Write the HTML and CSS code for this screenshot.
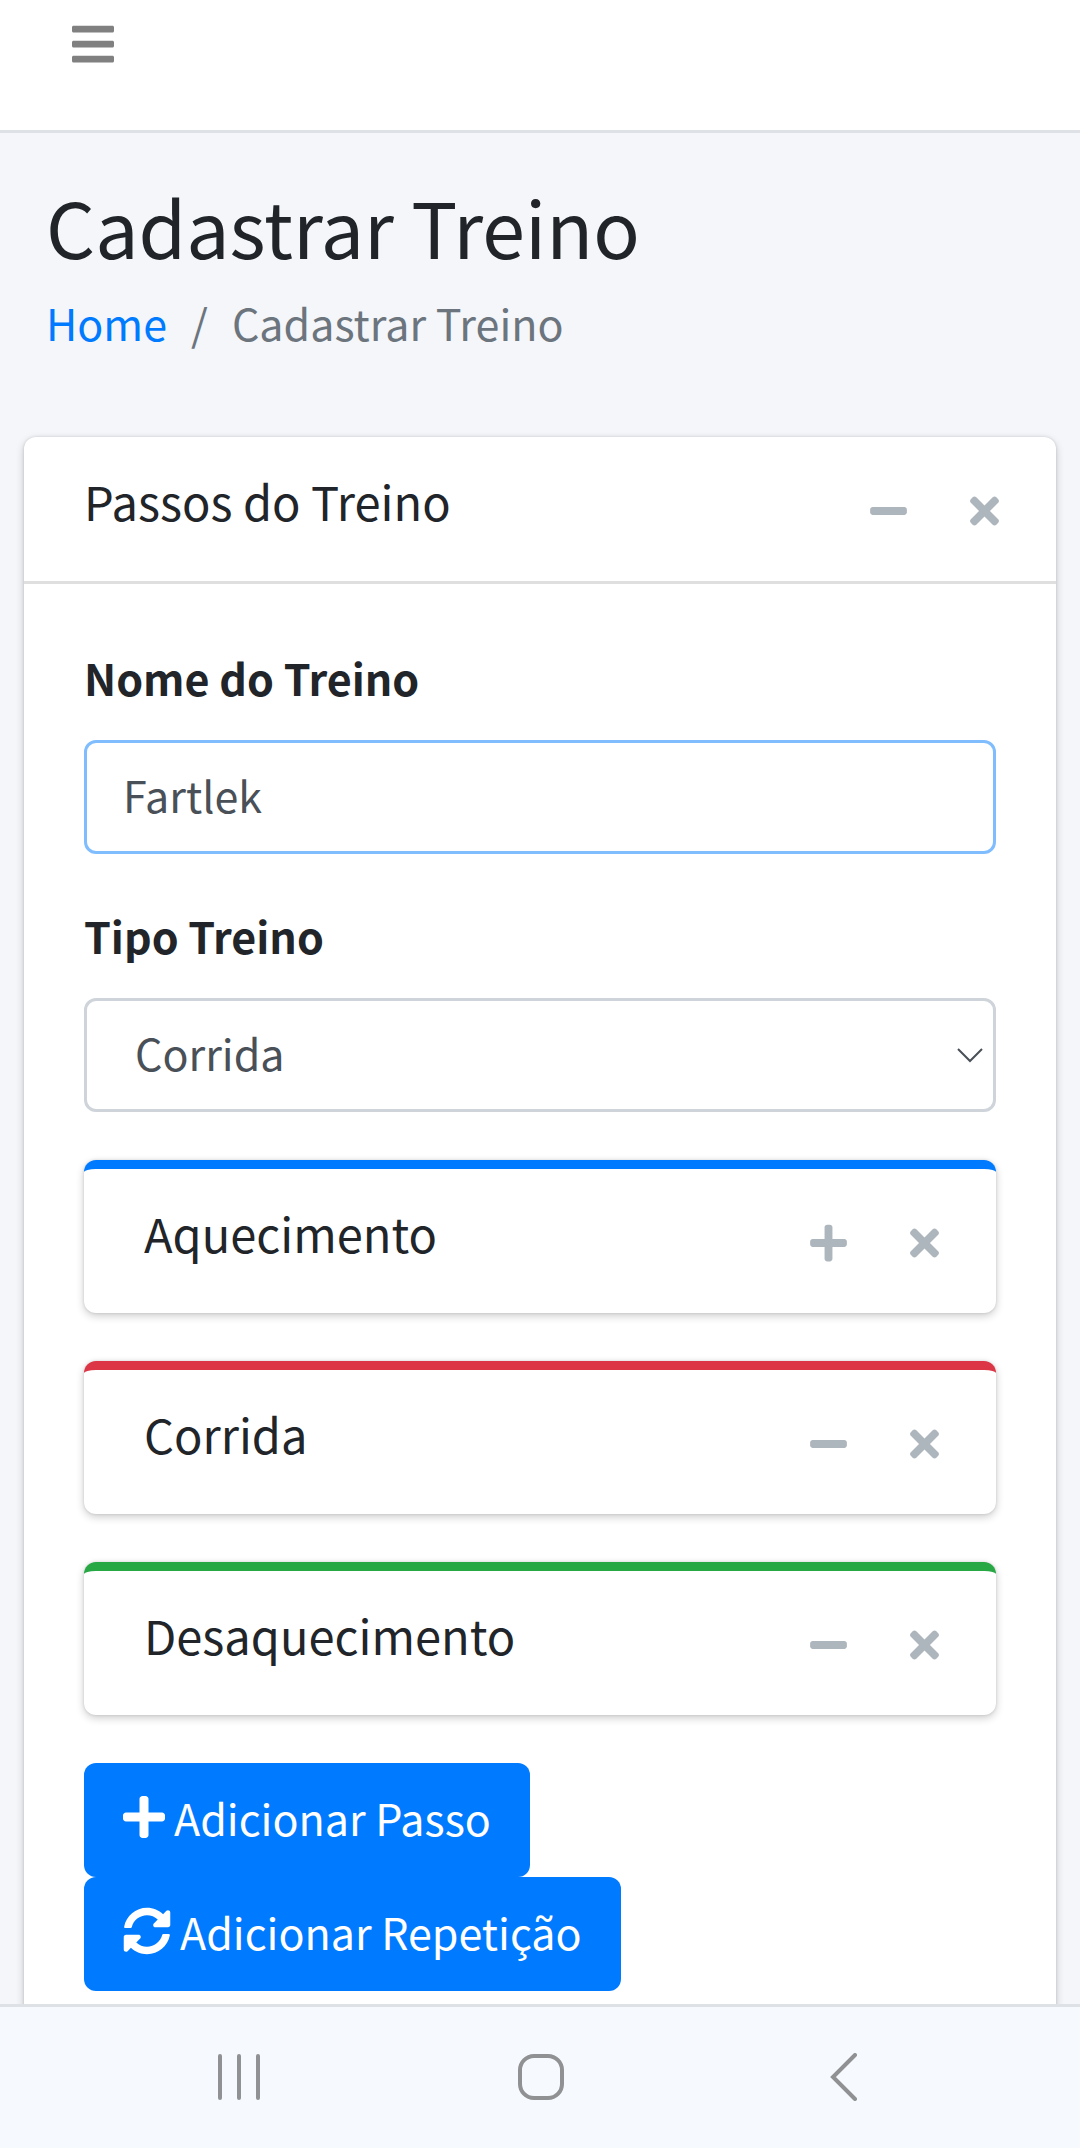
FILE: index.html
```html
<!DOCTYPE html>
<html lang="pt-BR">
<head>
<meta charset="utf-8">
<meta name="viewport" content="width=device-width, initial-scale=1">
<title>Cadastrar Treino</title>
<link rel="stylesheet" href="styles.css">
</head>
<body>
<svg class="sprite" aria-hidden="true">
  <symbol id="bars" viewBox="0 0 448 512"><path d="M16 132h416c8.837 0 16-7.163 16-16V76c0-8.837-7.163-16-16-16H16C7.163 60 0 67.163 0 76v40c0 8.837 7.163 16 16 16zm0 160h416c8.837 0 16-7.163 16-16v-40c0-8.837-7.163-16-16-16H16c-8.837 0-16 7.163-16 16v40c0 8.837 7.163 16 16 16zm0 160h416c8.837 0 16-7.163 16-16v-40c0-8.837-7.163-16-16-16H16c-8.837 0-16 7.163-16 16v40c0 8.837 7.163 16 16 16z"/></symbol>
  <symbol id="minus" viewBox="0 0 448 512"><path d="M416 208H32c-17.67 0-32 14.33-32 32v32c0 17.67 14.33 32 32 32h384c17.67 0 32-14.33 32-32v-32c0-17.67-14.33-32-32-32z"/></symbol>
  <symbol id="plus" viewBox="0 0 448 512"><path d="M416 208H272V64c0-17.67-14.33-32-32-32h-32c-17.67 0-32 14.33-32 32v144H32c-17.67 0-32 14.33-32 32v32c0 17.67 14.33 32 32 32h144v144c0 17.67 14.33 32 32 32h32c17.67 0 32-14.33 32-32V304h144c17.67 0 32-14.33 32-32v-32c0-17.67-14.33-32-32-32z"/></symbol>
  <symbol id="times" viewBox="0 0 352 512"><path d="M242.72 256l100.07-100.07c12.28-12.28 12.28-32.19 0-44.48l-22.24-22.24c-12.28-12.28-32.19-12.28-44.48 0L176 189.28 75.93 89.21c-12.28-12.28-32.19-12.28-44.48 0L9.21 111.45c-12.28 12.28-12.28 32.19 0 44.48L109.28 256 9.21 356.07c-12.28 12.28-12.28 32.19 0 44.48l22.24 22.24c12.28 12.28 32.2 12.28 44.48 0L176 322.72l100.07 100.07c12.28 12.28 32.2 12.28 44.48 0l22.24-22.24c12.28-12.28 12.28-32.19 0-44.48L242.72 256z"/></symbol>
  <symbol id="sync" viewBox="0 0 512 512"><path d="M370.72 133.28C339.458 104.008 298.888 87.962 255.848 88c-77.458.068-144.328 53.178-162.791 126.85-1.344 5.363-6.122 9.15-11.651 9.15H24.103c-7.498 0-13.194-6.807-11.807-14.176C33.933 94.924 134.813 8 256 8c66.448 0 126.791 26.136 171.315 68.685L463.03 40.97C478.149 25.851 504 36.559 504 57.941V192c0 13.255-10.745 24-24 24H345.941c-21.382 0-32.09-25.851-16.971-40.971l41.75-41.749zM32 296h134.059c21.382 0 32.09 25.851 16.971 40.971l-41.75 41.75c31.262 29.273 71.835 45.319 114.876 45.28 77.418-.07 144.315-53.144 162.787-126.849 1.344-5.363 6.122-9.15 11.651-9.15h57.304c7.498 0 13.194 6.807 11.807 14.176C478.067 417.076 377.187 504 256 504c-66.448 0-126.791-26.136-171.315-68.685L48.97 471.03C33.851 486.149 8 475.441 8 454.059V320c0-13.255 10.745-24 24-24z"/></symbol>
</svg>

<div class="app">
  <main class="page">
    <header class="topbar">
      <button class="icon-button" type="button" aria-label="Menu"><svg class="icon-bars"><use href="#bars"/></svg></button>
    </header>

    <section class="page-header">
      <h1 class="page-title">Cadastrar Treino</h1>
      <nav aria-label="Trilha">
        <ol class="breadcrumb">
          <li><a class="link" href="#">Home</a></li>
          <li class="current">Cadastrar Treino</li>
        </ol>
      </nav>
    </section>

    <section class="card">
      <div class="card-header divided">
        <h2 class="card-title">Passos do Treino</h2>
        <div class="tools">
          <button class="icon-button" type="button" aria-label="Recolher"><svg class="icon-tool"><use href="#minus"/></svg></button>
          <button class="icon-button" type="button" aria-label="Fechar"><svg class="icon-close"><use href="#times"/></svg></button>
        </div>
      </div>
      <form class="card-body">
        <div class="field">
          <label class="label" for="nome">Nome do Treino</label>
          <input class="control focused" id="nome" type="text" value="Fartlek">
        </div>
        <div class="field">
          <label class="label" for="tipo">Tipo Treino</label>
          <div class="select-wrap">
            <select class="control select" id="tipo"><option>Corrida</option></select>
            <svg class="chevron" viewBox="0 0 26 16" aria-hidden="true"><path d="M1 1l12 12L25 1"/></svg>
          </div>
        </div>

        <div class="steps">
          <section class="step step-blue">
            <div class="card-header">
              <h3 class="card-title">Aquecimento</h3>
              <div class="tools">
                <button class="icon-button" type="button" aria-label="Expandir"><svg class="icon-tool"><use href="#plus"/></svg></button>
                <button class="icon-button" type="button" aria-label="Fechar"><svg class="icon-close"><use href="#times"/></svg></button>
              </div>
            </div>
          </section>
          <section class="step step-red">
            <div class="card-header">
              <h3 class="card-title">Corrida</h3>
              <div class="tools">
                <button class="icon-button" type="button" aria-label="Recolher"><svg class="icon-tool"><use href="#minus"/></svg></button>
                <button class="icon-button" type="button" aria-label="Fechar"><svg class="icon-close"><use href="#times"/></svg></button>
              </div>
            </div>
          </section>
          <section class="step step-green">
            <div class="card-header">
              <h3 class="card-title">Desaquecimento</h3>
              <div class="tools">
                <button class="icon-button" type="button" aria-label="Recolher"><svg class="icon-tool"><use href="#minus"/></svg></button>
                <button class="icon-button" type="button" aria-label="Fechar"><svg class="icon-close"><use href="#times"/></svg></button>
              </div>
            </div>
          </section>
        </div>

        <div class="actions">
          <button class="button" type="button"><svg class="icon-plus"><use href="#plus"/></svg>Adicionar Passo</button>
          <button class="button" type="button"><svg class="icon-sync"><use href="#sync"/></svg>Adicionar Repetição</button>
        </div>
      </form>
    </section>
  </main>

  <nav class="system-bar" aria-label="Sistema">
    <button class="icon-button" type="button" aria-label="Recentes"><svg class="icon-system" viewBox="0 0 48 48"><path d="M5 3v42M24 3v42M43 3v42"/></svg></button>
    <button class="icon-button" type="button" aria-label="Início"><svg class="icon-system" viewBox="0 0 48 48"><rect x="3" y="3" width="42" height="42" rx="14"/></svg></button>
    <button class="icon-button" type="button" aria-label="Voltar"><svg class="icon-system" viewBox="0 0 48 48"><path d="M35 2L13 24l22 22"/></svg></button>
  </nav>
</div>
</body>
</html>
```
FILE: styles.css
```css
* {
  box-sizing: border-box;
}

body {
  margin: 0;
  background: #f4f6f9;
  color: #212529;
  font-family: "Noto Sans CJK JP", "Noto Sans", sans-serif;
  font-size: 43px;
  line-height: 72px;
}

.sprite {
  display: none;
}

svg {
  display: block;
  fill: currentColor;
}

.app {
  display: flex;
  flex-direction: column;
  height: 100vh;
}

.page {
  flex: 1;
  min-height: 0;
  overflow-y: auto;
  scrollbar-width: none;
}

.icon-button {
  padding: 0;
  border: 0;
  background: none;
  color: inherit;
}

.topbar {
  display: flex;
  padding: 20px 72px 62px;
  border-bottom: 3px solid #dee2e6;
  background: #fff;
  color: #808080;
}

.icon-bars {
  width: 42px;
  height: 48px;
}

.page-header {
  padding: 41px 46px 79px;
}

.page-title {
  margin: 0;
  font-size: 77px;
  font-weight: 400;
  line-height: 104px;
}

.breadcrumb {
  display: flex;
  gap: 24px;
  margin: 8px 0 0;
  padding: 0;
  list-style: none;
}

.link {
  color: #007bff;
  text-decoration: none;
}

.current {
  color: #6c757d;
}

.current::before {
  content: "/";
  padding-right: 24px;
}

.card {
  margin: 0 24px 48px;
  border-radius: 12px;
  background: #fff;
  box-shadow: 0 0 3px rgba(0, 0, 0, 0.125), 0 3px 9px rgba(0, 0, 0, 0.2);
}

.card-header {
  display: flex;
  justify-content: space-between;
  align-items: flex-start;
  padding: 36px 57px 36px 60px;
}

.divided {
  border-bottom: 3px solid #dfdfdf;
}

.card-title {
  margin: 0;
  font-size: 47px;
  font-weight: 400;
  line-height: 56px;
}

.tools {
  display: flex;
  align-items: center;
  gap: 63px;
  height: 72px;
  padding-top: 4px;
  color: #adb5bd;
}

.icon-tool {
  width: 37px;
  height: 42px;
}

.icon-close {
  width: 29px;
  height: 42px;
}

.card-body {
  padding: 60px;
}

.field {
  margin-bottom: 48px;
}

.label {
  display: block;
  margin-bottom: 30px;
  font-weight: 700;
  line-height: 66px;
}

.control {
  display: block;
  width: 100%;
  height: 114px;
  padding: 0 36px 6px;
  border: 3px solid #ced4da;
  border-radius: 12px;
  outline: 0;
  background: #fff;
  color: #495057;
  font: inherit;
}

.focused {
  border-color: #80bdff;
}

.select-wrap {
  position: relative;
}

.select {
  padding: 0 48px 6px;
  appearance: none;
}

.chevron {
  position: absolute;
  top: 50px;
  right: 13px;
  width: 26px;
  height: 16px;
  fill: none;
  stroke: #495057;
  stroke-width: 2;
  pointer-events: none;
}

.steps {
  display: grid;
  gap: 48px;
  margin-bottom: 48px;
}

.step {
  border-top: 9px solid;
  border-radius: 12px;
  background: #fff;
  box-shadow: 0 0 3px rgba(0, 0, 0, 0.125), 0 3px 9px rgba(0, 0, 0, 0.2);
}

.step-blue {
  border-color: #007bff;
}

.step-red {
  border-color: #dc3545;
}

.step-green {
  border-color: #28a745;
}

.actions {
  display: flex;
  flex-direction: column;
  align-items: flex-start;
}

.button {
  display: flex;
  align-items: center;
  gap: 9px;
  height: 114px;
  padding: 0 39px 6px;
  border: 0;
  border-radius: 12px;
  background: #007bff;
  color: #fff;
  font: inherit;
}

.icon-plus {
  width: 42px;
  height: 48px;
}

.icon-sync {
  width: 48px;
  height: 48px;
}

.system-bar {
  display: flex;
  justify-content: space-around;
  align-items: center;
  height: 144px;
  padding: 0 85px 2px 88px;
  border-top: 3px solid #dee2e6;
  background: #f6f9fe;
  color: #909193;
}

.icon-system {
  width: 48px;
  height: 48px;
  fill: none;
  stroke: currentColor;
  stroke-width: 4;
  stroke-linecap: round;
}
```
